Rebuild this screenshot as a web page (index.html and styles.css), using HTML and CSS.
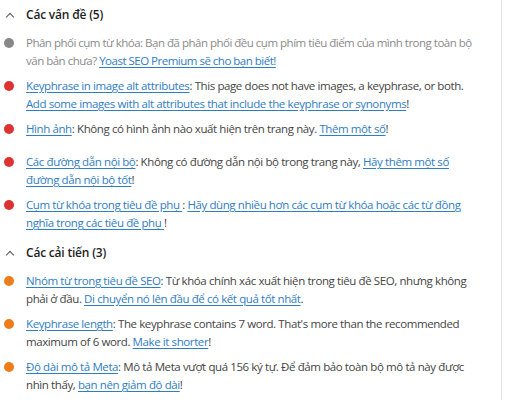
FILE: index.html
```html
<!DOCTYPE html>
<html lang="vi">
<head>
<meta charset="utf-8">
<link rel="stylesheet" href="styles.css">
</head>
<body>
<div class="panel">
  <section class="group">
    <h3 class="group-title"><span class="chevron"></span>Các vấn đề (5)</h3>
    <ul class="results">
      <li class="result muted"><span class="dot grey"></span><p>Phân phối cụm từ khóa: Bạn đã phân phối đều cụm phím tiêu điểm của mình trong toàn bộ văn bản chưa? <a href="#">Yoast SEO Premium sẽ cho bạn biết!</a></p></li>
      <li class="result"><span class="dot red"></span><p><a href="#">Keyphrase in image alt attributes</a>: This page does not have images, a keyphrase, or both. <a href="#">Add some images with alt attributes that include the keyphrase or synonyms</a>!</p></li>
      <li class="result"><span class="dot red"></span><p><a href="#">Hình ảnh</a>: Không có hình ảnh nào xuất hiện trên trang này. <a href="#">Thêm một số</a>!</p></li>
      <li class="result"><span class="dot red"></span><p><a href="#">Các đường dẫn nội bộ</a>: Không có đường dẫn nội bộ trong trang này, <a href="#">Hãy thêm một số đường dẫn nội bộ tốt</a>!</p></li>
      <li class="result"><span class="dot red"></span><p><a href="#">Cụm từ khóa trong tiêu đề phụ </a>: <a href="#">Hãy dùng nhiều hơn các cụm từ khóa hoặc các từ đồng nghĩa trong các tiêu đề phụ </a>!</p></li>
    </ul>
  </section>
  <section class="group">
    <h3 class="group-title"><span class="chevron"></span>Các cải tiến (3)</h3>
    <ul class="results">
      <li class="result"><span class="dot orange"></span><p><a href="#">Nhóm từ trong tiêu đề SEO</a>: Từ khóa chính xác xuất hiện trong tiêu đề SEO, nhưng không phải ở đầu. <a href="#">Di chuyển nó lên đầu để có kết quả tốt nhất</a>.</p></li>
      <li class="result"><span class="dot orange"></span><p><a href="#">Keyphrase length</a>: The keyphrase contains 7 word. That's more than the recommended maximum of 6 word. <a href="#">Make it shorter</a>!</p></li>
      <li class="result"><span class="dot orange"></span><p><a href="#">Độ dài mô tả Meta</a>: Mô tả Meta vượt quá 156 ký tự. Để đảm bảo toàn bộ mô tả này được nhìn thấy, <a href="#">bạn nên giảm độ dài</a>!</p></li>
    </ul>
  </section>
</div>
</body>
</html>
```
FILE: styles.css
```css
html, body {
  margin: 0;
  padding: 0;
  background: #fff;
}

body {
  font-family: "Open Sans", "Noto Sans", sans-serif;
  font-size: 11.5px;
  letter-spacing: -0.4px;
  color: #1e1e1e;
  width: 512px;
  height: 400px;
  overflow: hidden;
}

.panel {
  width: 502px;
  height: 400px;
  box-sizing: border-box;
  border-right: 1px solid #e2e4e7;
  padding: 6px 22px 0 0;
}

.group + .group {
  margin-top: 12px;
}

.group-title {
  display: flex;
  align-items: center;
  margin: 0 0 10px 0;
  font-size: 12px;
  font-weight: 600;
  letter-spacing: -0.2px;
  line-height: 18px;
  color: #1e1e1e;
}

.chevron {
  width: 5px;
  height: 5px;
  border-left: 1.3px solid #555;
  border-top: 1.3px solid #555;
  transform: rotate(45deg);
  margin: 4px 13px 0 7px;
}

.results {
  list-style: none;
  margin: 0;
  padding: 0;
}

.result {
  display: flex;
  align-items: flex-start;
  min-height: 26px;
  margin-bottom: 7px;
  line-height: 18px;
}

.result p {
  margin: 0;
  color: #444;
}

/* upsell hint: lighter and slightly tighter */
.result.muted p {
  color: #8a8a8a;
  letter-spacing: -0.5px;
}

.dot {
  flex: none;
  width: 10px;
  height: 10px;
  border-radius: 50%;
  margin: 4px 12px 0 4px;
}

.dot.grey { background: #888; }
.dot.red { background: #dc3232; }
.dot.orange { background: #ee7c1b; }

.result a {
  color: #2f7dc2;
  text-decoration: underline;
  text-underline-offset: 2px;
}
```
